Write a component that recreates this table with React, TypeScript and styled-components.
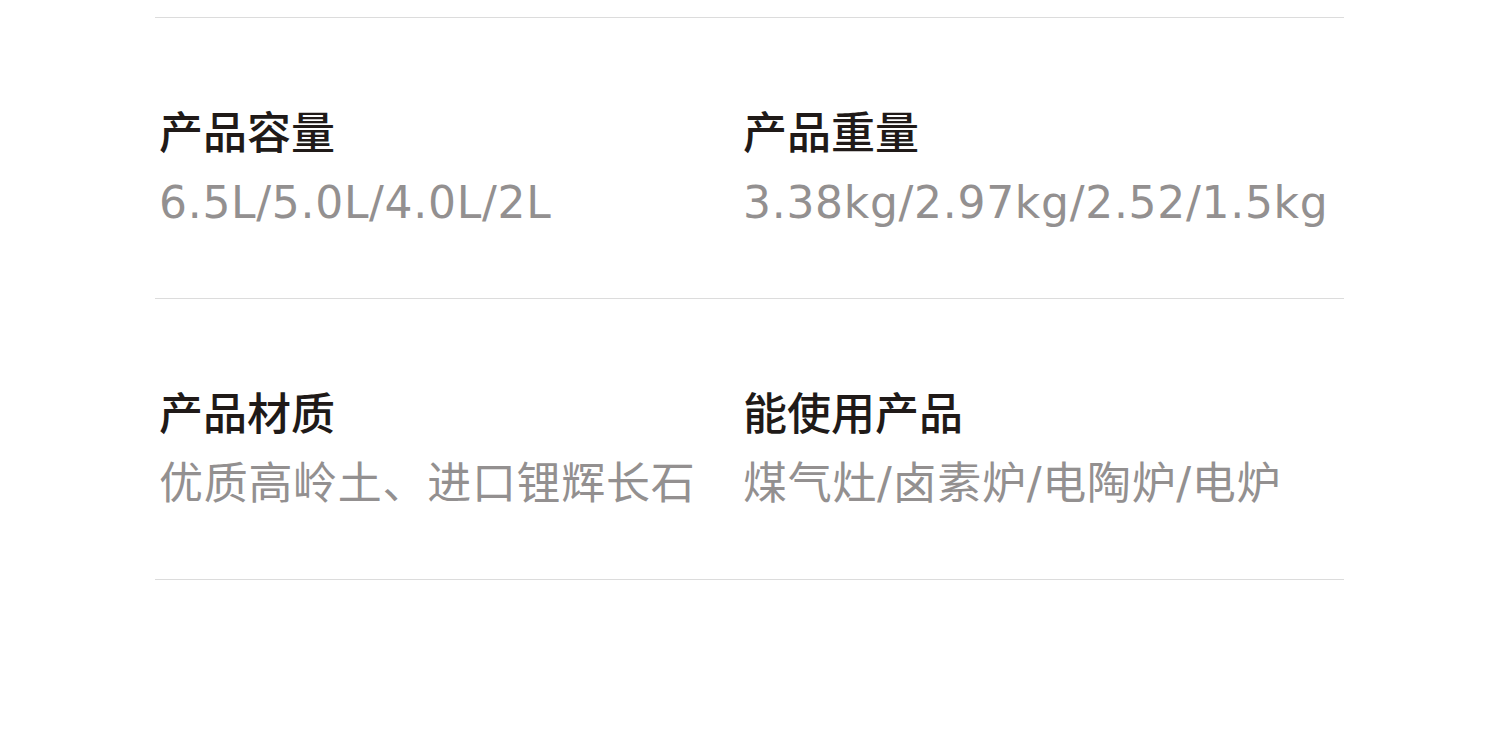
import styled, { createGlobalStyle } from "styled-components";

const GlobalStyle = createGlobalStyle`
  html, body {
    margin: 0;
    padding: 0;
    background: #ffffff;
  }
  body {
    font-family: "Noto Sans CJK SC", "Noto Sans", sans-serif;
  }
`;

type Spec = { label: string; value: string };

const rows: Spec[][] = [
  [
    { label: "产品容量", value: "6.5L/5.0L/4.0L/2L" },
    { label: "产品重量", value: "3.38kg/2.97kg/2.52/1.5kg" },
  ],
  [
    { label: "产品材质", value: "优质高岭土、进口锂辉长石" },
    { label: "能使用产品", value: "煤气灶/卤素炉/电陶炉/电炉" },
  ],
];

export default function App() {
  return (
    <>
      <GlobalStyle />
      <Page>
        <SpecTable>
          {rows.map((row, i) => (
            <SpecRow key={i}>
              {row.map((item) => (
                <SpecCell key={item.label}>
                  <Label>{item.label}</Label>
                  <Value>{item.value}</Value>
                </SpecCell>
              ))}
            </SpecRow>
          ))}
        </SpecTable>
      </Page>
    </>
  );
}

const Page = styled.div`
  width: 1500px;
  height: 753px;
  padding: 17px 0 0 155px;
  box-sizing: border-box;
  overflow: hidden;
`;

const SpecTable = styled.div`
  width: 1189px;
  border-bottom: 1px solid #dcdcdc;
`;

const SpecRow = styled.div`
  display: grid;
  grid-template-columns: 584px 1fr;
  height: 281px;
  box-sizing: border-box;
  border-top: 1px solid #dcdcdc;
  padding: 82px 0 0 4px;
`;

const SpecCell = styled.div`
  display: flex;
  flex-direction: column;
  gap: 13px;
`;

const Label = styled.div`
  font-size: 44px;
  line-height: 60px;
  font-weight: 500;
  color: #201a18;
`;

const Value = styled.div`
  font-family: "DejaVu Sans", "Noto Sans CJK SC", sans-serif;
  font-size: 44px;
  line-height: 60px;
  font-weight: 400;
  letter-spacing: 0.7px;
  color: #939090;
  white-space: nowrap;
`;
